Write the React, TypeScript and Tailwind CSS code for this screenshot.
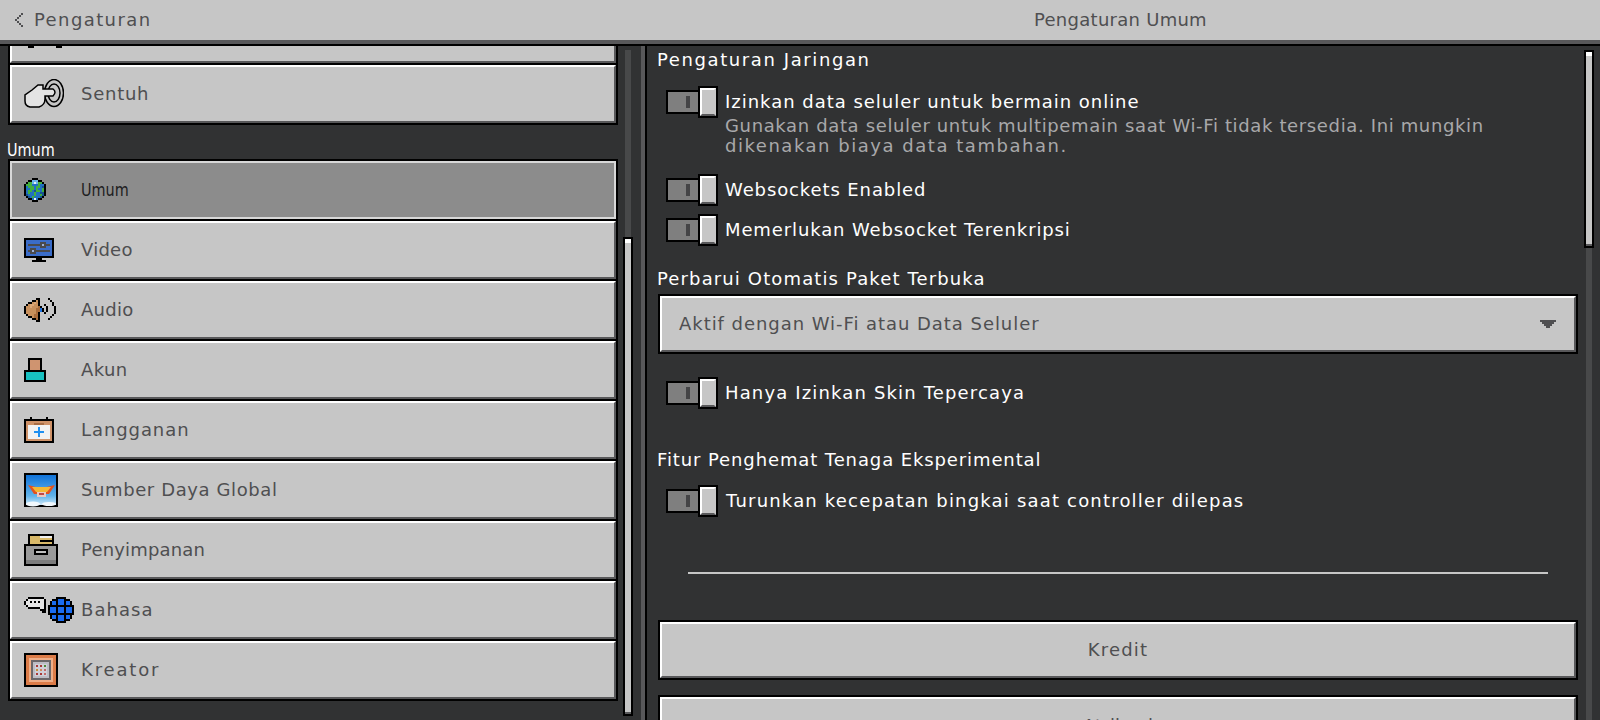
import React from "react";

type PixelProps = {
  rows: string[];
  palette: Record<string, string>;
  cell?: number;
};

// draws a small map of characters as square pixels
const Pixels = ({ rows, palette, cell = 2 }: PixelProps) => (
  <svg width={rows[0].length * cell} height={rows.length * cell} shapeRendering="crispEdges">
    {rows.map((row, y) =>
      row.split("").map((c, x) =>
        palette[c] ? <rect key={`${x}-${y}`} x={x * cell} y={y * cell} width={cell} height={cell} fill={palette[c]} /> : null
      )
    )}
  </svg>
);

const GlobeIcon = () => (
  <Pixels
    palette={{ k: "#000", b: "#2070c0", g: "#42b03e", l: "#6cb4e8", w: "#e4eff5", d: "#175490" }}
    rows={[
      "....kkk....",
      "..kklllkk..",
      ".kgglwlggk.",
      "kgggbbbgbbk",
      "kbgggbggbdk",
      "kbbggbgbbgk",
      "kbggbdggbgk",
      "kbgbbgbbddk",
      "kdbbbgbbgdk",
      ".kdbgbbbdk.",
      "..kkbwbkk..",
      "....kkk....",
    ]}
  />
);

const VideoIcon = () => (
  <svg width="30" height="24" shapeRendering="crispEdges">
    <rect x="0" y="0" width="30" height="20" fill="#000" />
    <rect x="2" y="2" width="26" height="16" fill="#3a6cc8" />
    <rect x="4" y="6" width="22" height="2" fill="#4a4a4c" />
    <rect x="16" y="4" width="6" height="6" fill="#4a4a4c" />
    <rect x="18" y="6" width="2" height="2" fill="#9ab0dc" />
    <rect x="4" y="12" width="22" height="2" fill="#4a4a4c" />
    <rect x="6" y="10" width="6" height="6" fill="#4a4a4c" />
    <rect x="8" y="12" width="2" height="2" fill="#9ab0dc" />
    <rect x="12" y="20" width="6" height="2" fill="#000" />
    <rect x="8" y="22" width="14" height="2" fill="#000" />
  </svg>
);

const AudioIcon = () => (
  <Pixels
    palette={{ k: "#000", o: "#c8905c", l: "#dca878", d: "#a86c3c", b: "#1a70e0" }}
    rows={[
      "......kk....k...",
      "....kkok.....k..",
      "..kkolok......k.",
      ".kollook..k...k.",
      "koolooodk..k...k",
      "koooooddbk.k...k",
      "koooooddbk.k...k",
      "kooooodk..k....k",
      ".koooddk......k.",
      "..kkoddk.....k..",
      "....kkdk....k...",
      "......kk........",
    ]}
  />
);

const AccountIcon = () => (
  <svg width="22" height="24" shapeRendering="crispEdges">
    <rect x="4" y="0" width="14" height="14" fill="#000" />
    <rect x="6" y="2" width="10" height="10" fill="#cf9470" />
    <rect x="0" y="12" width="22" height="12" fill="#000" />
    <rect x="2" y="14" width="18" height="8" fill="#17c0c0" />
  </svg>
);

const SubscriptionIcon = () => (
  <svg width="30" height="26" shapeRendering="crispEdges">
    <rect x="6" y="0" width="2" height="2" fill="#000" />
    <rect x="22" y="0" width="2" height="2" fill="#000" />
    <rect x="0" y="2" width="30" height="24" fill="#000" />
    <rect x="2" y="4" width="26" height="20" fill="#cf9268" />
    <rect x="10" y="6" width="10" height="2" fill="#a86c44" />
    <rect x="4" y="8" width="22" height="14" fill="#f2f2f2" />
    <rect x="14" y="10" width="2" height="10" fill="#2090f0" />
    <rect x="10" y="14" width="10" height="2" fill="#2090f0" />
  </svg>
);

const ResourceIcon = () => (
  <svg width="34" height="34">
    <defs>
      <linearGradient id="sky" x1="0" y1="0" x2="0" y2="1">
        <stop offset="0" stopColor="#0f72d8" />
        <stop offset="0.7" stopColor="#62b4ea" />
        <stop offset="1" stopColor="#cfe8f8" />
      </linearGradient>
    </defs>
    <rect width="34" height="34" fill="#000" />
    <rect x="2" y="2" width="30" height="30" fill="url(#sky)" />
    <ellipse cx="9" cy="31" rx="7" ry="2.5" fill="#f2f8fc" />
    <ellipse cx="25" cy="31" rx="7" ry="2" fill="#f2f8fc" />
    <polygon points="4,12 16,15 16,21 10,21" fill="#e4521e" />
    <polygon points="31,12 18,15 18,21 25,21" fill="#e4521e" />
    <polygon points="8,14 27,14 23,19 12,19" fill="#f4b834" />
    <rect x="13" y="19" width="9" height="5" fill="#eec8c0" />
    <rect x="15" y="20" width="5" height="2" fill="#c04848" />
  </svg>
);

const StorageIcon = () => (
  <svg width="34" height="32" shapeRendering="crispEdges">
    <rect x="4" y="0" width="26" height="12" fill="#000" />
    <rect x="6" y="2" width="10" height="10" fill="#d8b868" />
    <rect x="16" y="4" width="12" height="8" fill="#d8b868" />
    <rect x="16" y="2" width="12" height="2" fill="#f0f0f0" />
    <rect x="16" y="6" width="12" height="2" fill="#000" />
    <rect x="0" y="10" width="34" height="22" fill="#000" />
    <rect x="2" y="12" width="30" height="18" fill="#9a9a9a" />
    <rect x="2" y="26" width="30" height="4" fill="#7c7c7c" />
    <rect x="10" y="15" width="14" height="6" fill="#000" />
    <rect x="12" y="17" width="10" height="2" fill="#c0c0c0" />
  </svg>
);

const ChatIcon = () => (
  <Pixels
    palette={{ k: "#000", w: "#e6e6e6" }}
    rows={[
      "..kkkkkkkk.",
      ".kwwwwwwwwk",
      "kwwkwkwkwwk",
      "kwwwwwwwwwk",
      ".kwwwwwwwwk",
      "..kkkkkkwwk",
      "........kkk",
      ".........kk",
    ]}
  />
);

const WebIcon = () => (
  <Pixels
    palette={{ k: "#000", b: "#1a6cf0" }}
    rows={[
      "....kkkkk....",
      "..kkkbbbkkk..",
      ".kbbkbbbkbbk.",
      ".kbbkbbbkbbk.",
      "kkkkkkkkkkkkk",
      "kbbbkbbbkbbbk",
      "kbbbkbbbkbbbk",
      "kbbbkbbbkbbbk",
      "kkkkkkkkkkkkk",
      ".kbbkbbbkbbk.",
      ".kbbkbbbkbbk.",
      "..kkkbbbkkk..",
      "....kkkkk....",
    ]}
  />
);

const CreatorIcon = () => (
  <svg width="34" height="34" shapeRendering="crispEdges">
    <rect width="34" height="34" fill="#000" />
    <rect x="2" y="2" width="30" height="30" fill="#dc7c48" />
    <rect x="5" y="5" width="24" height="24" fill="#eeae88" />
    <rect x="7" y="7" width="20" height="20" fill="#6a6668" />
    <rect x="9" y="9" width="16" height="16" fill="#bcbcc4" />
    <rect x="11" y="11" width="12" height="12" fill="#d0d0d8" />
    {[
      ["#a83838", 12, 12], ["#a83838", 16, 12], ["#4c8a3c", 20, 12],
      ["#c89038", 12, 16], ["#d08860", 16, 16], ["#c06868", 20, 16],
      ["#a83838", 12, 20], ["#a83838", 16, 20], ["#c06868", 20, 20],
    ].map(([c, x, y]) => (
      <rect key={`${x}-${y}`} x={x as number} y={y as number} width="2" height="2" fill={c as string} />
    ))}
  </svg>
);

const TouchIcon = () => (
  <svg width="40" height="30" fill="none" stroke="#000" strokeWidth="1.5">
    <ellipse cx="30" cy="14" rx="9.5" ry="13.5" />
    <ellipse cx="30" cy="14" rx="6" ry="9" />
    <path d="M8 11 L14 6 H19 V10 H29 Q33 13 29 17 H21 V20 Q21 26 15 28 H6 Q1 27 1 22 V16 Z" fill="#e4e4e4" />
  </svg>
);

type RowProps = {
  label: string;
  icon: React.ReactNode;
  track: string;
  selected?: boolean;
  last?: boolean;
};

const MenuRow = ({ label, icon, track, selected, last }: RowProps) => (
  <div className={`shrink-0 border-t-2 border-x-2 border-black ${last ? "h-[62px] border-b-2" : "h-[60px]"}`}>
    <div
      className={`h-[58px] flex items-center border-2 ${
        selected
          ? "bg-[#8c8c8c] border-[#d8d8d8] text-[#1e1e1f]"
          : "bg-[#c6c6c6] border-t-white border-l-white border-r-[#58585a] border-b-[#58585a] text-[#4f4f51]"
      }`}
    >
      <div className="w-[69px] pl-[12px] flex items-center shrink-0">{icon}</div>
      <span className={track}>{label}</span>
    </div>
  </div>
);

const Toggle = () => (
  <div className="flex items-center shrink-0 h-[32px]">
    <div className="w-[32px] h-[24px] border-2 border-r-0 border-black bg-[#7f7f7f] flex items-center justify-end pr-[8px]">
      <div className="w-[4px] h-[12px] bg-[#444446]" />
    </div>
    <div className="w-[20px] h-[32px] border-2 border-black">
      <div className="h-full bg-[#c6c6c6] border-2 border-t-white border-l-white border-r-[#c6c6c6] border-b-[#58585a]" />
    </div>
  </div>
);

const ToggleRow = ({ label, track, cls }: { label: string; track: string; cls?: string }) => (
  <div className={`flex items-center gap-[8px] pl-[9px] h-[32px] shrink-0 ${cls ?? ""}`}>
    <Toggle />
    <span className={`text-white ${track}`}>{label}</span>
  </div>
);

const BigButton = ({ label, track, cls }: { label: string; track: string; cls?: string }) => (
  <div className={`ml-px w-[920px] h-[60px] shrink-0 border-2 border-black ${cls ?? ""}`}>
    <div className="h-full flex items-center justify-center bg-[#c6c6c6] text-[#4f4f51] border-2 border-t-white border-l-white border-r-[#58585a] border-b-[#58585a]">
      <span className={track}>{label}</span>
    </div>
  </div>
);

const Thumb = ({ height }: { height: string }) => (
  <div className={`w-[10px] ${height} border-2 border-black shrink-0`}>
    <div className="h-full bg-[#c6c6c6] border-t-4 border-t-white border-b-2 border-b-[#58585a]" />
  </div>
);

export default function App() {
  return (
    <div className="w-[1600px] h-[720px] overflow-hidden flex flex-col bg-[#313233] font-['DejaVu_Sans',sans-serif] text-[18px] leading-[20px]">
      <header className="h-[46px] shrink-0 bg-[#c6c6c6] border-b-2 border-black">
        <div className="h-[44px] border-b-4 border-[#58585a] flex items-center text-[#4f4f51]">
          <div className="w-[647px] flex items-center pl-[15px] gap-[11px] shrink-0">
            <Pixels
              palette={{ k: "#4f4f51" }}
              cell={2}
              rows={["...k", "..k.", ".k..", "k...", ".k..", "..k.", "...k"]}
            />
            <span className="tracking-[1.4px]">Pengaturan</span>
          </div>
          <div className="flex-1 text-center pr-[6px] tracking-[0.27px]">Pengaturan Umum</div>
        </div>
      </header>

      <div className="flex-1 flex min-h-0">
        {/* left menu */}
        <div className="w-[647px] shrink-0 flex border-r-2 border-black overflow-hidden">
          <div className="flex-1 flex">
            <div className="w-[610px] ml-[8px] shrink-0 flex flex-col">
              <div className="h-[17px] shrink-0 border-x-2 border-black">
                <div className="h-full relative bg-[#c6c6c6] border-2 border-t-0 border-l-white border-r-[#58585a] border-b-[#58585a]">
                  <div className="absolute top-0 left-[16px] w-[6px] h-[2px] bg-black" />
                  <div className="absolute top-0 left-[44px] w-[6px] h-[2px] bg-black" />
                </div>
              </div>
              <MenuRow label="Sentuh" track="tracking-[0.74px]" icon={<TouchIcon />} last />
              <div className="h-[34px] shrink-0 flex items-end text-white -ml-px">
                <span className="inline-block origin-left scale-x-[0.8] translate-y-px">Umum</span>
              </div>
              <MenuRow label="Umum" track="inline-block origin-left scale-x-[0.8]" selected icon={<GlobeIcon />} />
              <MenuRow label="Video" track="tracking-[0.25px]" icon={<VideoIcon />} />
              <MenuRow label="Audio" track="tracking-[0.25px]" icon={<AudioIcon />} />
              <MenuRow label="Akun" track="tracking-[0.37px]" icon={<AccountIcon />} />
              <MenuRow label="Langganan" track="tracking-[0.92px]" icon={<SubscriptionIcon />} />
              <MenuRow label="Sumber Daya Global" track="tracking-[0.6px]" icon={<ResourceIcon />} />
              <MenuRow label="Penyimpanan" track="tracking-[0.17px]" icon={<StorageIcon />} />
              <MenuRow
                label="Bahasa"
                track="tracking-[1.05px]"
                icon={
                  <div className="flex items-start gap-[2px] -mr-[8px]">
                    <ChatIcon />
                    <WebIcon />
                  </div>
                }
              />
              <MenuRow label="Kreator" track="tracking-[1.84px]" icon={<CreatorIcon />} last />
            </div>
            <div className="ml-[5px] w-[10px] shrink-0 flex flex-col items-center pt-[4px]">
              <div className="w-[6px] h-[187px] bg-[#48494a] shrink-0" />
              <Thumb height="h-[479px]" />
            </div>
          </div>
          <div className="w-[4px] shrink-0 bg-[#58585a] ml-auto" />
        </div>

        {/* right settings */}
        <div className="flex-1 flex min-w-0 overflow-hidden">
          <div className="w-[937px] shrink-0 flex flex-col pl-[10px] pt-[4px]">
            <div className="h-[20px] shrink-0 text-white tracking-[1.6px]">Pengaturan Jaringan</div>
            <div className="flex items-start gap-[7px] pl-[9px] mt-[16px] shrink-0">
              <Toggle />
              <div className="pt-[6px]">
                <div className="text-white tracking-[0.98px]">Izinkan data seluler untuk bermain online</div>
                <div className="mt-[4px] text-[#a8a8aa] tracking-[0.64px]">
                  Gunakan data seluler untuk multipemain saat Wi-Fi tidak tersedia. Ini mungkin
                </div>
                <div className="text-[#a8a8aa] tracking-[1.53px]">dikenakan biaya data tambahan.</div>
              </div>
            </div>
            <ToggleRow label="Websockets Enabled" track="tracking-[0.89px] -ml-px" cls="mt-[18px]" />
            <ToggleRow label="Memerlukan Websocket Terenkripsi" track="tracking-[0.88px] -ml-px" cls="mt-[8px]" />
            <div className="mt-[23px] h-[20px] shrink-0 text-white tracking-[1.13px]">Perbarui Otomatis Paket Terbuka</div>
            <div className="ml-px mt-[5px] w-[920px] h-[60px] shrink-0 border-2 border-black">
              <div className="h-full flex items-center justify-between pl-[17px] pr-[18px] bg-[#c6c6c6] text-[#4f4f51] border-2 border-t-white border-l-white border-r-[#58585a] border-b-[#58585a]">
                <span className="tracking-[0.95px]">Aktif dengan Wi-Fi atau Data Seluler</span>
                <Pixels
                  palette={{ k: "#4f4f51" }}
                  cell={2}
                  rows={["kkkkkkkk", ".kkkkkk.", "..kkkk..", "...kk..."]}
                />
              </div>
            </div>
            <ToggleRow label="Hanya Izinkan Skin Tepercaya" track="tracking-[1.15px] -ml-px" cls="mt-[23px]" />
            <div className="mt-[41px] h-[20px] shrink-0 text-white tracking-[0.89px]">Fitur Penghemat Tenaga Eksperimental</div>
            <ToggleRow label="Turunkan kecepatan bingkai saat controller dilepas" track="tracking-[1.19px]" cls="mt-[15px]" />
            <div className="mt-[55px] ml-[31px] w-[860px] h-[2px] shrink-0 bg-[#c6c6c6]" />
            <BigButton label="Kredit" track="tracking-[1.15px]" cls="mt-[46px]" />
            <BigButton label="Atribusi" track="tracking-[0.24px] translate-y-px" cls="mt-[15px]" />
          </div>
          <div className="w-[10px] shrink-0 flex flex-col items-center pt-[4px]">
            <Thumb height="h-[198px]" />
            <div className="w-[6px] flex-1 bg-[#48494a]" />
          </div>
        </div>
      </div>
    </div>
  );
}
